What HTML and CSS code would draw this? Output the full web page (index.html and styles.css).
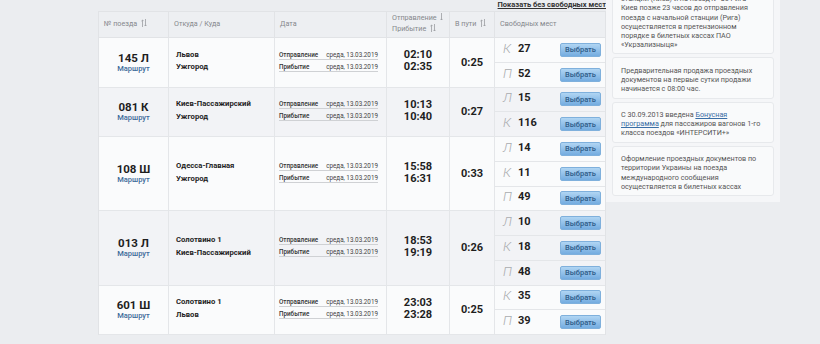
FILE: index.html
```html
<!DOCTYPE html>
<html lang="ru">
<head>
<meta charset="utf-8">
<title>Поезда</title>
<link rel="stylesheet" href="styles.css">
</head>
<body>
<div class="page">
  <div class="main">
    <div class="toplink"><a href="#">Показать без свободных мест</a></div>
    <div class="table">
      <div class="thead">
        <div class="th">№ поезда <svg class="sort" width="6" height="8" viewBox="0 0 6 8"><path d="M1.5 8V1M0.4 2.1L1.5 1L2.6 2.1M4.5 0V7M3.4 5.9L4.5 7L5.6 5.9"/></svg></div>
        <div class="th">Откуда / Куда</div>
        <div class="th">Дата</div>
        <div class="th two">
          <div>Отправление <svg class="sort" width="3" height="8" viewBox="0 0 3 8"><path d="M1.5 0V7M0.4 5.9L1.5 7L2.6 5.9"/></svg></div>
          <div>Прибытие <svg class="sort" width="6" height="8" viewBox="0 0 6 8"><path d="M1.5 8V1M0.4 2.1L1.5 1L2.6 2.1M4.5 0V7M3.4 5.9L4.5 7L5.6 5.9"/></svg></div>
        </div>
        <div class="th">В пути <svg class="sort" width="6" height="8" viewBox="0 0 6 8"><path d="M1.5 8V1M0.4 2.1L1.5 1L2.6 2.1M4.5 0V7M3.4 5.9L4.5 7L5.6 5.9"/></svg></div>
        <div class="th">Свободных мест</div>
      </div>

      <div class="tr odd">
        <div class="td train"><div class="num">145 Л</div><a class="route" href="#">Маршрут</a></div>
        <div class="td stations"><div>Львов</div><div>Ужгород</div></div>
        <div class="td dates">
          <div class="dl"><span class="lbl">Отправление</span><span>среда, 13.03.2019</span></div>
          <div class="dl"><span class="lbl">Прибытие</span><span>среда, 13.03.2019</span></div>
        </div>
        <div class="td times"><div>02:10</div><div>02:35</div></div>
        <div class="td dur">0:25</div>
        <div class="td seats">
          <div class="seat"><span class="type">К</span><span class="cnt">27</span><button class="btn">Выбрать</button></div>
          <div class="seat"><span class="type">П</span><span class="cnt">52</span><button class="btn">Выбрать</button></div>
        </div>
      </div>

      <div class="tr even">
        <div class="td train"><div class="num">081 К</div><a class="route" href="#">Маршрут</a></div>
        <div class="td stations"><div>Киев-Пассажирский</div><div>Ужгород</div></div>
        <div class="td dates">
          <div class="dl"><span class="lbl">Отправление</span><span>среда, 13.03.2019</span></div>
          <div class="dl"><span class="lbl">Прибытие</span><span>среда, 13.03.2019</span></div>
        </div>
        <div class="td times"><div>10:13</div><div>10:40</div></div>
        <div class="td dur">0:27</div>
        <div class="td seats">
          <div class="seat"><span class="type">Л</span><span class="cnt">15</span><button class="btn">Выбрать</button></div>
          <div class="seat"><span class="type">К</span><span class="cnt">116</span><button class="btn">Выбрать</button></div>
        </div>
      </div>

      <div class="tr odd">
        <div class="td train"><div class="num">108 Ш</div><a class="route" href="#">Маршрут</a></div>
        <div class="td stations"><div>Одесса-Главная</div><div>Ужгород</div></div>
        <div class="td dates">
          <div class="dl"><span class="lbl">Отправление</span><span>среда, 13.03.2019</span></div>
          <div class="dl"><span class="lbl">Прибытие</span><span>среда, 13.03.2019</span></div>
        </div>
        <div class="td times"><div>15:58</div><div>16:31</div></div>
        <div class="td dur">0:33</div>
        <div class="td seats">
          <div class="seat"><span class="type">Л</span><span class="cnt">14</span><button class="btn">Выбрать</button></div>
          <div class="seat"><span class="type">К</span><span class="cnt">11</span><button class="btn">Выбрать</button></div>
          <div class="seat"><span class="type">П</span><span class="cnt">49</span><button class="btn">Выбрать</button></div>
        </div>
      </div>

      <div class="tr even">
        <div class="td train"><div class="num">013 Л</div><a class="route" href="#">Маршрут</a></div>
        <div class="td stations"><div>Солотвино 1</div><div>Киев-Пассажирский</div></div>
        <div class="td dates">
          <div class="dl"><span class="lbl">Отправление</span><span>среда, 13.03.2019</span></div>
          <div class="dl"><span class="lbl">Прибытие</span><span>среда, 13.03.2019</span></div>
        </div>
        <div class="td times"><div>18:53</div><div>19:19</div></div>
        <div class="td dur">0:26</div>
        <div class="td seats">
          <div class="seat"><span class="type">Л</span><span class="cnt">10</span><button class="btn">Выбрать</button></div>
          <div class="seat"><span class="type">К</span><span class="cnt">18</span><button class="btn">Выбрать</button></div>
          <div class="seat"><span class="type">П</span><span class="cnt">48</span><button class="btn">Выбрать</button></div>
        </div>
      </div>

      <div class="tr odd">
        <div class="td train"><div class="num">601 Ш</div><a class="route" href="#">Маршрут</a></div>
        <div class="td stations"><div>Солотвино 1</div><div>Львов</div></div>
        <div class="td dates">
          <div class="dl"><span class="lbl">Отправление</span><span>среда, 13.03.2019</span></div>
          <div class="dl"><span class="lbl">Прибытие</span><span>среда, 13.03.2019</span></div>
        </div>
        <div class="td times"><div>23:03</div><div>23:28</div></div>
        <div class="td dur">0:25</div>
        <div class="td seats">
          <div class="seat"><span class="type">К</span><span class="cnt">35</span><button class="btn">Выбрать</button></div>
          <div class="seat"><span class="type">П</span><span class="cnt">39</span><button class="btn">Выбрать</button></div>
        </div>
      </div>
    </div>
  </div>

  <div class="aside">
    <div class="panel">
      <div class="card">Оформление проездных документов на<br>поезд № 35 Киев - Рига от промежуточной<br>станции (Киев) и на поезд № 36 Рига -<br>Киев позже 23 часов до отправления<br>поезда с начальной станции (Рига)<br>осуществляется в претензионном<br>порядке в билетных кассах ПАО<br>«Укрзализныця»</div>
      <div class="card">Предварительная продажа проездных<br>документов на первые сутки продажи<br>начинается с 08:00 час.</div>
      <div class="card">С 30.09.2013 введена <a href="#">Бонусная<br>программа</a> для пассажиров вагонов 1-го<br>класса поездов «ИНТЕРСИТИ+»</div>
      <div class="card">Оформление проездных документов по<br>территории Украины на поезда<br>международного сообщения<br>осуществляется в билетных кассах</div>
    </div>
  </div>
</div>
</body>
</html>
```

FILE: styles.css
```css
* { box-sizing: border-box; }
html, body { margin: 0; }
body {
  background: #ebedf0;
  font-family: Roboto, "Liberation Sans", sans-serif;
  color: #222;
  height: 344px;
  overflow: hidden;
}
.page {
  display: flex;
  align-items: flex-start;
  padding-left: 98px;
}
.main { width: 508px; }
.toplink {
  height: 11px;
  padding-top: 0.5px;
  font-size: 7.5px;
  line-height: 8px;
  text-align: right;
  font-weight: 700;
}
.toplink a { color: #333; text-decoration: underline; }

.table {
  border: 1px solid #e1e3e6;
  border-bottom: 0;
}
.thead, .tr {
  display: grid;
  grid-template-columns: 69px 106px 112px 63px 45px 111px;
}
.thead {
  height: 26px;
  background: #edeff2;
  border-bottom: 1px solid #e1e3e6;
}
.th {
  padding: 7px 0 0 5px;
  font-size: 7.2px;
  line-height: 10.5px;
  color: #85888c;
  white-space: nowrap;
}
.th.two { padding-top: 1px; }
.th svg { vertical-align: -1px; }
.th:not(:first-child) { border-left: 1px solid #e1e3e6; }
.sort { margin-left: 2px; }
.sort path { stroke: #9a9da1; stroke-width: 0.8; fill: none; }

.tr { border-bottom: 1px solid #e4e6e9; }
.tr.odd { background: #fafbfc; }
.tr.even { background: #f2f3f6; }
.td {
  display: flex;
  flex-direction: column;
  justify-content: center;
}
.td:not(:first-child) { border-left: 1px solid #e4e6e9; }

.train { align-items: center; padding-top: 1px; }
.num { font-size: 11.5px; font-weight: 700; line-height: 12px; color: #1e1e1e; }
.route {
  font-size: 7.5px;
  line-height: 10px;
  font-weight: 500;
  color: #3d6b9a;
  text-decoration: none;
}

.stations {
  padding: 0 0 2px 7px;
  font-size: 7.7px;
  font-weight: 700;
  line-height: 12.4px;
  color: #1e1e1e;
}

.dates { padding: 0 8px 2px 4px; }
.dl {
  display: flex;
  justify-content: space-between;
  font-size: 6.3px;
  line-height: 8px;
  color: #444;
  border-bottom: 1px solid #cfd1d4;
}
.dl + .dl { margin-top: 3px; }
.lbl { font-weight: 500; color: #333; }

.times {
  align-items: center;
  padding-bottom: 2px;
  font-size: 11px;
  font-weight: 700;
  line-height: 12px;
  color: #1e1e1e;
}
.dur {
  align-items: center;
  font-size: 11px;
  font-weight: 700;
  color: #1e1e1e;
}

.seats { justify-content: flex-start; }
.seat {
  height: 24.75px;
  display: flex;
  align-items: center;
  padding: 0 4px 0 8px;
  border-bottom: 1px solid #e4e6e9;
}
.seat:last-child { border-bottom: 0; height: 23.75px; }
.type {
  width: 15px;
  font-size: 13px;
  font-style: italic;
  font-weight: 300;
  color: #a9abae;
  margin-bottom: 3px;
}
.cnt {
  font-size: 11px;
  font-weight: 700;
  color: #1e1e1e;
  margin-bottom: 3px;
}
.btn {
  margin-left: auto;
  width: 41px;
  height: 14px;
  padding: 0;
  border: 1px solid #7fb0dc;
  border-radius: 2px;
  background: linear-gradient(#b0d5f3, #74ace0);
  font-family: Roboto, "Liberation Sans", sans-serif;
  font-size: 7.5px;
  font-weight: 500;
  color: #2e5b88;
}

.aside {
  width: 174px;
  height: 202px;
  display: flex;
  flex-direction: column;
  justify-content: flex-end;
}
.panel {
  background: #f5f6f8;
  padding: 6px;
  display: flex;
  flex-direction: column;
  gap: 3px;
}
.card {
  background: #f9fafb;
  border: 1px solid #e7e9ec;
  border-radius: 3px;
  padding: 7.5px 4px 4px 8px;
  font-size: 7.2px;
  line-height: 9.2px;
  color: #555;
  white-space: nowrap;
}
.card a { color: #3a6ea5; text-decoration: underline; }
```
